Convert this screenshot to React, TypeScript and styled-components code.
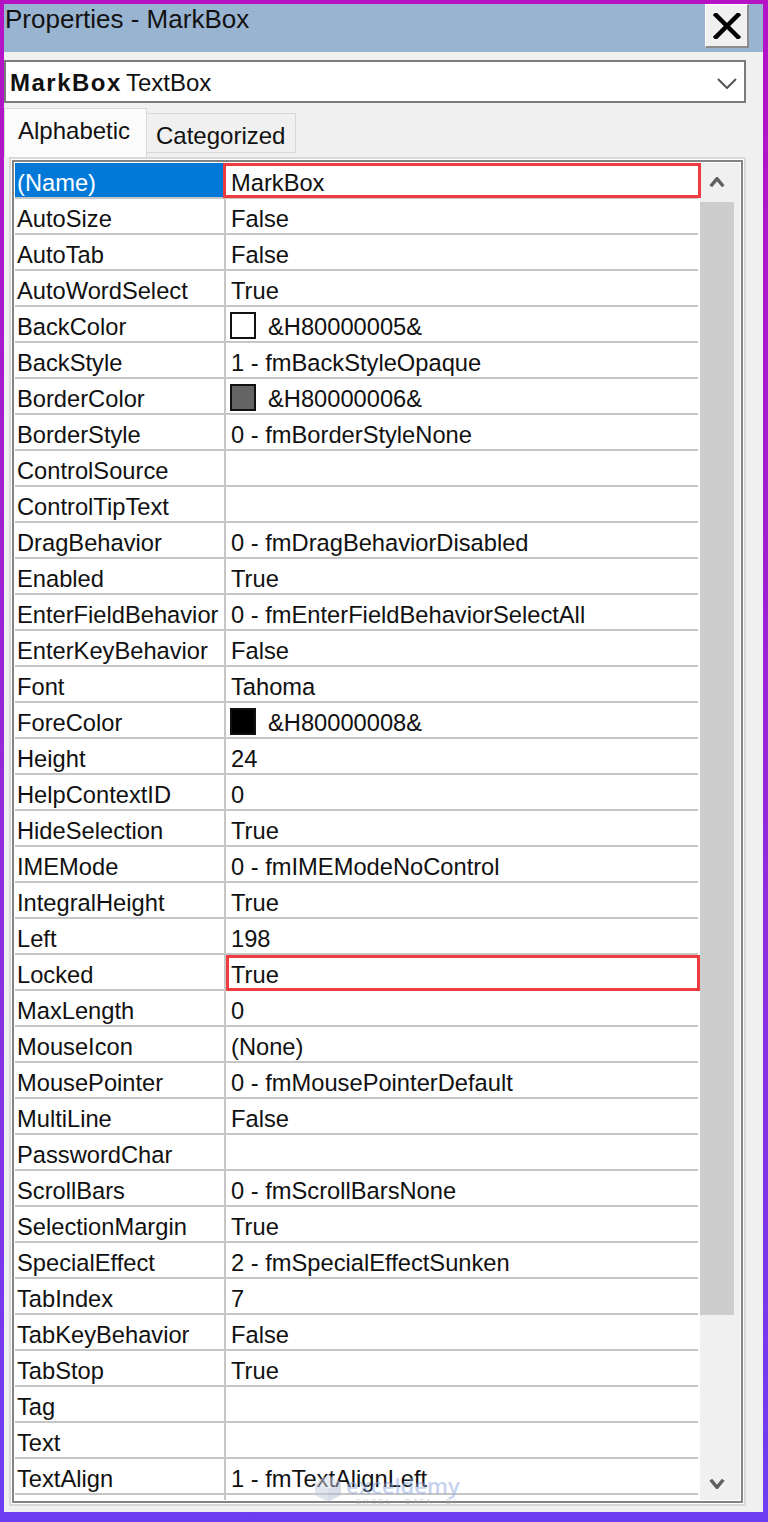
import React from "react";
import styled, { createGlobalStyle } from "styled-components";

const GlobalStyle = createGlobalStyle`
  html, body { margin: 0; padding: 0; }
  body {
    width: 768px;
    height: 1522px;
    overflow: hidden;
    font-family: "Liberation Sans", Arial, sans-serif;
    color: #111;
  }
  * { box-sizing: border-box; }
`;

const Window = styled.div`
  width: 768px;
  height: 1522px;
  padding: 4px 5px 10px 4px;
  background: linear-gradient(180deg, #b512c6 0%, #a01fd2 35%, #8a2fe2 65%, #6c3ef3 100%);
  display: flex;
`;

const Panel = styled.div`
  flex: 1;
  background: #f0f0f0;
  display: flex;
  flex-direction: column;
`;

const TitleBar = styled.div`
  height: 48px;
  background: #99b4d1;
  display: flex;
  align-items: flex-start;
  justify-content: space-between;
`;

const TitleText = styled.div`
  font-size: 26px;
  line-height: 31px;
  padding-left: 1px;
  color: #121212;
`;

const CloseButton = styled.div`
  width: 44px;
  height: 44px;
  margin-right: 14px;
  background: #f0f0f0;
  border-top: 1px solid #ffffff;
  border-left: 1px solid #ffffff;
  border-right: 2px solid #8c8c8c;
  border-bottom: 2px solid #8c8c8c;
  display: flex;
  align-items: center;
  justify-content: center;
`;

const Dropdown = styled.div`
  height: 43px;
  margin: 8px 17px 0 0;
  border: 2px solid #7a7a7a;
  background: #ffffff;
  display: flex;
  align-items: flex-start;
  justify-content: space-between;
  padding: 2px 7px 0 4px;
  font-size: 24px;
  line-height: 37px;
`;

const DropText = styled.div`
  color: #111;
  white-space: pre;
`;

const Bold = styled.span`
  font-weight: 700;
  letter-spacing: 1.5px;
  margin-right: 4px;
`;

const DropChevron = styled.div`
  height: 37px;
  display: flex;
  align-items: center;
  padding-top: 2px;
`;

const TabsRow = styled.div`
  margin-top: 5px;
  height: 49px;
  display: flex;
  align-items: flex-start;
`;

const Tab = styled.div<{ $active?: boolean }>`
  font-size: 24px;
  line-height: 44px;
  color: #111;
  white-space: nowrap;
  ${(p) =>
    p.$active
      ? `
    width: 143px;
    height: 49px;
    background: #fbfbfb;
    border: 1px solid #d9d9d9;
    border-bottom: none;
    padding-left: 13px;
  `
      : `
    width: 149px;
    height: 40px;
    margin-top: 5px;
    background: #f0f0f0;
    border: 1px solid #d9d9d9;
    border-left: none;
    padding-left: 9px;
  `}
`;

const FrameOuter = styled.div`
  position: relative;
  margin: 0 17px 0 5px;
  border: 2px solid #d9d9d9;
  padding: 1px;
  background: #ffffff;
`;

const FrameInner = styled.div`
  border: 2px solid #838383;
  padding: 1px;
  background: #ffffff;
`;

const Content = styled.div`
  height: 1337px;
  overflow: hidden;
  display: flex;
`;

const Table = styled.div`
  width: 685px;
  display: flex;
  flex-direction: column;
  background: #ffffff;
`;

const Row = styled.div`
  height: 36px;
  flex: 0 0 36px;
  display: flex;
`;

const NameCell = styled.div<{ $selected?: boolean }>`
  width: 211px;
  height: 36px;
  border-right: 2px solid #c6c6c6;
  border-bottom: 2px solid #c6c6c6;
  padding-left: 2px;
  font-size: 23.7px;
  line-height: 40px;
  white-space: nowrap;
  overflow: visible;
  background: ${(p) => (p.$selected ? "#0078d7" : "#ffffff")};
  color: ${(p) => (p.$selected ? "#ffffff" : "#111111")};
`;

const ValueCell = styled.div`
  position: relative;
  width: 472px;
  height: 36px;
  border-bottom: 2px solid #c6c6c6;
  padding-left: 5px;
  display: flex;
  align-items: flex-start;
  font-size: 23.7px;
  line-height: 40px;
  white-space: nowrap;
  color: #111111;
`;

const Swatch = styled.div<{ $color: string }>`
  width: 26px;
  height: 27px;
  margin: 5px 12px 0 -1px;
  border: 2px solid #111111;
  background: ${(p) => p.$color};
  flex: 0 0 auto;
`;

const RedBox = styled.div<{ $wide?: boolean }>`
  position: absolute;
  top: 0;
  bottom: ${(p) => (p.$wide ? "-1px" : "-2px")};
  left: ${(p) => (p.$wide ? "-3px" : "0")};
  right: ${(p) => (p.$wide ? "-3px" : "-2px")};
  border: 3px solid #f03c40;
  pointer-events: none;
`;

const ScrollBar = styled.div`
  width: 40px;
  background: #f0f0f0;
  display: flex;
  flex-direction: column;
  padding-right: 6px;
`;

const ArrowButton = styled.div<{ $h: number; $end?: boolean }>`
  height: ${(p) => p.$h}px;
  flex: 0 0 auto;
  display: flex;
  align-items: center;
  justify-content: center;
  margin-top: ${(p) => (p.$end ? "auto" : "0")};
`;

const Thumb = styled.div`
  height: 1113px;
  flex: 0 0 auto;
  background: #cdcdcd;
`;

const Watermark = styled.div`
  position: absolute;
  left: 302px;
  bottom: -3px;
  display: flex;
  align-items: flex-start;
  gap: 3px;
  opacity: 0.5;
  pointer-events: none;
`;

const WmText = styled.div`
  display: flex;
  flex-direction: column;
  align-items: flex-start;
`;

const WmBrand = styled.div`
  font-family: "Open Sans", "Liberation Sans", sans-serif;
  font-size: 22px;
  font-weight: 600;
  line-height: 24px;
  color: #8ea8e0;
`;

const WmTag = styled.div`
  font-family: "Liberation Sans", sans-serif;
  font-size: 8px;
  letter-spacing: 2px;
  line-height: 10px;
  margin-left: 10px;
  color: #a8a8a8;
`;

type RowData = { name: string; value: string; swatch?: string };

const rows: RowData[] = [
  { name: "(Name)", value: "MarkBox" },
  { name: "AutoSize", value: "False" },
  { name: "AutoTab", value: "False" },
  { name: "AutoWordSelect", value: "True" },
  { name: "BackColor", value: "&H80000005&", swatch: "#ffffff" },
  { name: "BackStyle", value: "1 - fmBackStyleOpaque" },
  { name: "BorderColor", value: "&H80000006&", swatch: "#646464" },
  { name: "BorderStyle", value: "0 - fmBorderStyleNone" },
  { name: "ControlSource", value: "" },
  { name: "ControlTipText", value: "" },
  { name: "DragBehavior", value: "0 - fmDragBehaviorDisabled" },
  { name: "Enabled", value: "True" },
  { name: "EnterFieldBehavior", value: "0 - fmEnterFieldBehaviorSelectAll" },
  { name: "EnterKeyBehavior", value: "False" },
  { name: "Font", value: "Tahoma" },
  { name: "ForeColor", value: "&H80000008&", swatch: "#000000" },
  { name: "Height", value: "24" },
  { name: "HelpContextID", value: "0" },
  { name: "HideSelection", value: "True" },
  { name: "IMEMode", value: "0 - fmIMEModeNoControl" },
  { name: "IntegralHeight", value: "True" },
  { name: "Left", value: "198" },
  { name: "Locked", value: "True" },
  { name: "MaxLength", value: "0" },
  { name: "MouseIcon", value: "(None)" },
  { name: "MousePointer", value: "0 - fmMousePointerDefault" },
  { name: "MultiLine", value: "False" },
  { name: "PasswordChar", value: "" },
  { name: "ScrollBars", value: "0 - fmScrollBarsNone" },
  { name: "SelectionMargin", value: "True" },
  { name: "SpecialEffect", value: "2 - fmSpecialEffectSunken" },
  { name: "TabIndex", value: "7" },
  { name: "TabKeyBehavior", value: "False" },
  { name: "TabStop", value: "True" },
  { name: "Tag", value: "" },
  { name: "Text", value: "" },
  { name: "TextAlign", value: "1 - fmTextAlignLeft" },
  { name: "", value: "" },
];

const CloseIcon = () => (
  <svg width="28" height="26" viewBox="0 0 28 26">
    <path d="M3 2 L25 24 M25 2 L3 24" stroke="#000" strokeWidth="4.5" strokeLinecap="square" fill="none" />
  </svg>
);

const Chevron = ({ up, w, h, sw, color }: { up?: boolean; w: number; h: number; sw: number; color: string }) => (
  <svg width={w} height={h} viewBox={`0 0 ${w} ${h}`}>
    <path
      d={up ? `M${sw / 2} ${h - sw / 2} L${w / 2} ${sw / 2} L${w - sw / 2} ${h - sw / 2}` : `M${sw / 2} ${sw / 2} L${w / 2} ${h - sw / 2} L${w - sw / 2} ${sw / 2}`}
      stroke={color}
      strokeWidth={sw}
      fill="none"
      strokeLinejoin="miter"
    />
  </svg>
);

const Cube = () => (
  <svg width="30" height="30" viewBox="0 0 30 30">
    <polygon points="15,2 28,9 15,16 2,9" fill="#d6dcea" />
    <polygon points="2,9 15,16 15,29 2,22" fill="#c3cbdd" />
    <polygon points="28,9 15,16 15,29 28,22" fill="#b3bdd4" />
  </svg>
);

export default function App() {
  return (
    <>
      <GlobalStyle />
      <Window>
        <Panel>
          <TitleBar>
            <TitleText>Properties - MarkBox</TitleText>
            <CloseButton>
              <CloseIcon />
            </CloseButton>
          </TitleBar>
          <Dropdown>
            <DropText>
              <Bold>MarkBox</Bold>TextBox
            </DropText>
            <DropChevron>
              <Chevron w={20} h={11} sw={2} color="#555" />
            </DropChevron>
          </Dropdown>
          <TabsRow>
            <Tab $active>Alphabetic</Tab>
            <Tab>Categorized</Tab>
          </TabsRow>
          <FrameOuter>
            <FrameInner>
              <Content>
                <Table>
                  {rows.map((r, i) => (
                    <Row key={i}>
                      <NameCell $selected={i === 0}>{r.name}</NameCell>
                      <ValueCell>
                        {r.swatch && <Swatch $color={r.swatch} />}
                        {r.value}
                        {i === 0 && <RedBox $wide />}
                        {r.name === "Locked" && <RedBox />}
                      </ValueCell>
                    </Row>
                  ))}
                </Table>
                <ScrollBar>
                  <ArrowButton $h={39}>
                    <Chevron up w={16} h={11} sw={3.5} color="#606060" />
                  </ArrowButton>
                  <Thumb />
                  <ArrowButton $h={33} $end>
                    <Chevron w={16} h={11} sw={3.5} color="#606060" />
                  </ArrowButton>
                </ScrollBar>
              </Content>
            </FrameInner>
            <Watermark>
              <Cube />
              <WmText>
                <WmBrand>exceldemy</WmBrand>
                <WmTag>EXCEL · DATA · BI</WmTag>
              </WmText>
            </Watermark>
          </FrameOuter>
        </Panel>
      </Window>
    </>
  );
}
